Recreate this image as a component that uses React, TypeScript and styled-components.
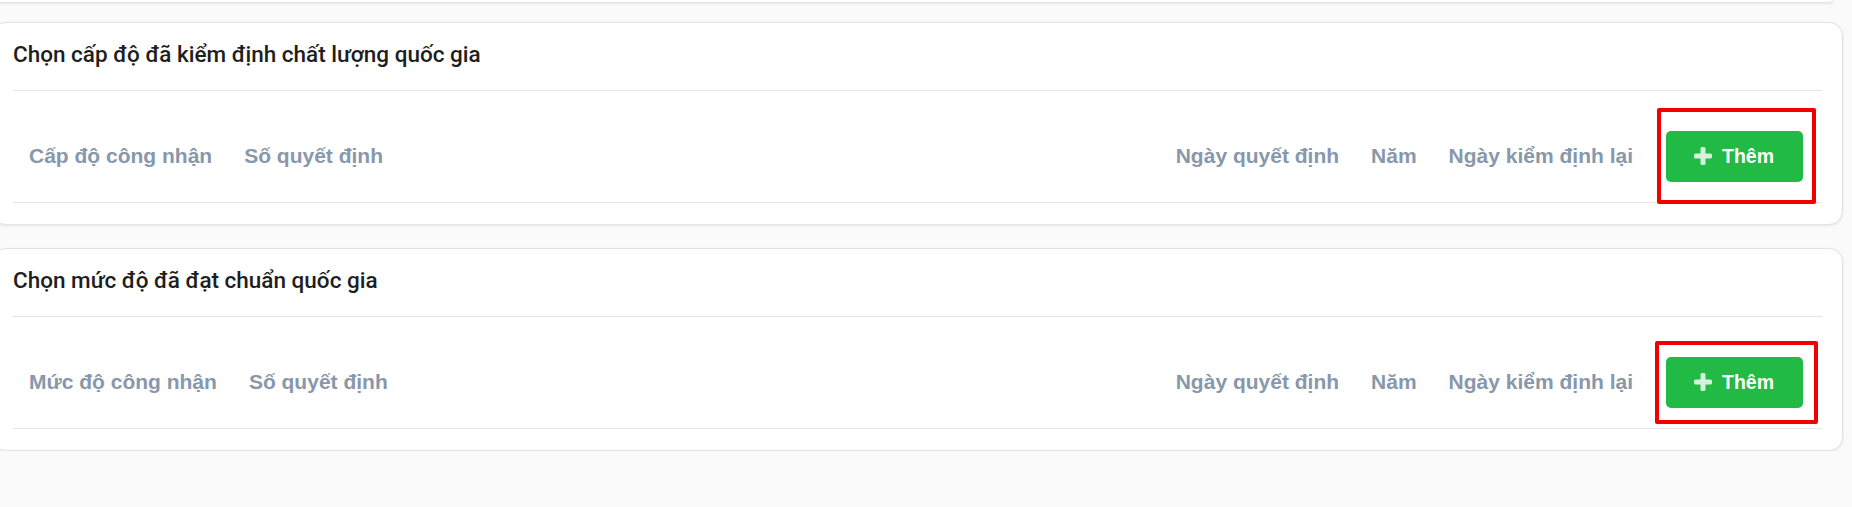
import React from "react";
import styled, { createGlobalStyle } from "styled-components";

const GlobalStyle = createGlobalStyle`
  html, body {
    margin: 0;
    padding: 0;
    background: #fafafa;
    font-family: "Liberation Sans", Arial, sans-serif;
    overflow: hidden;
  }
  * { box-sizing: border-box; }
`;

const Page = styled.div`
  display: flex;
  flex-direction: column;
  gap: 23px;
  margin: 0 9px 0 -8px;
`;

const PrevCardEdge = styled.div`
  height: 3px;
  margin: 0 10px -4px 0;
  background: #fff;
  border: 1px solid #e4e4e4;
  border-top: none;
  border-radius: 0 0 12px 12px;
  box-shadow: 0 1px 3px rgba(0, 0, 0, 0.08);
`;

const Card = styled.section`
  background: #fff;
  border: 1px solid #e2e2e2;
  border-radius: 14px;
  box-shadow: 0 1px 3px rgba(0, 0, 0, 0.08);
  padding: 0 20px 21px 20px;
`;

const CardHeader = styled.header`
  padding: 17px 0 22px 0;
  border-bottom: 1px solid #e4e4e4;
`;

const CardTitle = styled.h3`
  margin: 0;
  font-family: Roboto, "Liberation Sans", sans-serif;
  font-weight: 500;
  font-size: 22.5px;
  line-height: 28px;
  color: #1e1e1e;
`;

const HeaderRow = styled.div`
  margin-top: 19px;
  height: 93px;
  display: flex;
  align-items: center;
  border-bottom: 1px solid #e6e6e6;
`;

const HeadCell = styled.div`
  padding: 0 16px;
  font-family: "Liberation Sans", Arial, sans-serif;
  font-weight: 700;
  font-size: 21px;
  color: #8898aa;
  white-space: nowrap;
`;

const Spacer = styled.div`
  flex: 1;
`;

const ActionCell = styled.div`
  padding: 0 19px 0 17px;
  display: flex;
  align-items: center;
`;

const ButtonWrap = styled.span`
  position: relative;
  display: inline-flex;
`;

const AddButton = styled.button`
  height: 51px;
  padding: 0 29px 0 28px;
  display: inline-flex;
  align-items: center;
  gap: 10px;
  border: none;
  border-radius: 5px;
  background: #21ba45;
  color: #fff;
  font-family: "Liberation Sans", Arial, sans-serif;
  font-weight: 700;
  font-size: 19.5px;
  cursor: pointer;
`;

const Highlight = styled.span<{ $t: number; $r: number; $b: number; $l: number }>`
  position: absolute;
  top: ${(p) => -p.$t}px;
  right: ${(p) => -p.$r}px;
  bottom: ${(p) => -p.$b}px;
  left: ${(p) => -p.$l}px;
  border: 4px solid #f20000;
  border-radius: 2px;
  pointer-events: none;
`;

const PlusIcon = () => (
  <svg width="18" height="18" viewBox="0 0 18 18" aria-hidden="true">
    <g fill="#d4f2dc">
      <rect x="6.5" y="0" width="5" height="18" rx="1.5" />
      <rect x="0" y="6.5" width="18" height="5" rx="1.5" />
    </g>
  </svg>
);

type Box = { t: number; r: number; b: number; l: number };

const LevelCard = ({
  title,
  firstCol,
  box,
}: {
  title: string;
  firstCol: string;
  box: Box;
}) => (
  <Card>
    <CardHeader>
      <CardTitle>{title}</CardTitle>
    </CardHeader>
    <HeaderRow>
      <HeadCell>{firstCol}</HeadCell>
      <HeadCell>Số quyết định</HeadCell>
      <Spacer />
      <HeadCell>Ngày quyết định</HeadCell>
      <HeadCell>Năm</HeadCell>
      <HeadCell>Ngày kiểm định lại</HeadCell>
      <ActionCell>
        <ButtonWrap>
          <AddButton type="button">
            <PlusIcon />
            Thêm
          </AddButton>
          <Highlight $t={box.t} $r={box.r} $b={box.b} $l={box.l} />
        </ButtonWrap>
      </ActionCell>
    </HeaderRow>
  </Card>
);

export default function App() {
  return (
    <>
      <GlobalStyle />
      <Page>
        <PrevCardEdge />
        <LevelCard
          title="Chọn cấp độ đã kiểm định chất lượng quốc gia"
          firstCol="Cấp độ công nhận"
          box={{ t: 23, r: 13, b: 22, l: 9 }}
        />
        <LevelCard
          title="Chọn mức độ đã đạt chuẩn quốc gia"
          firstCol="Mức độ công nhận"
          box={{ t: 16, r: 15, b: 16, l: 11 }}
        />
      </Page>
    </>
  );
}
